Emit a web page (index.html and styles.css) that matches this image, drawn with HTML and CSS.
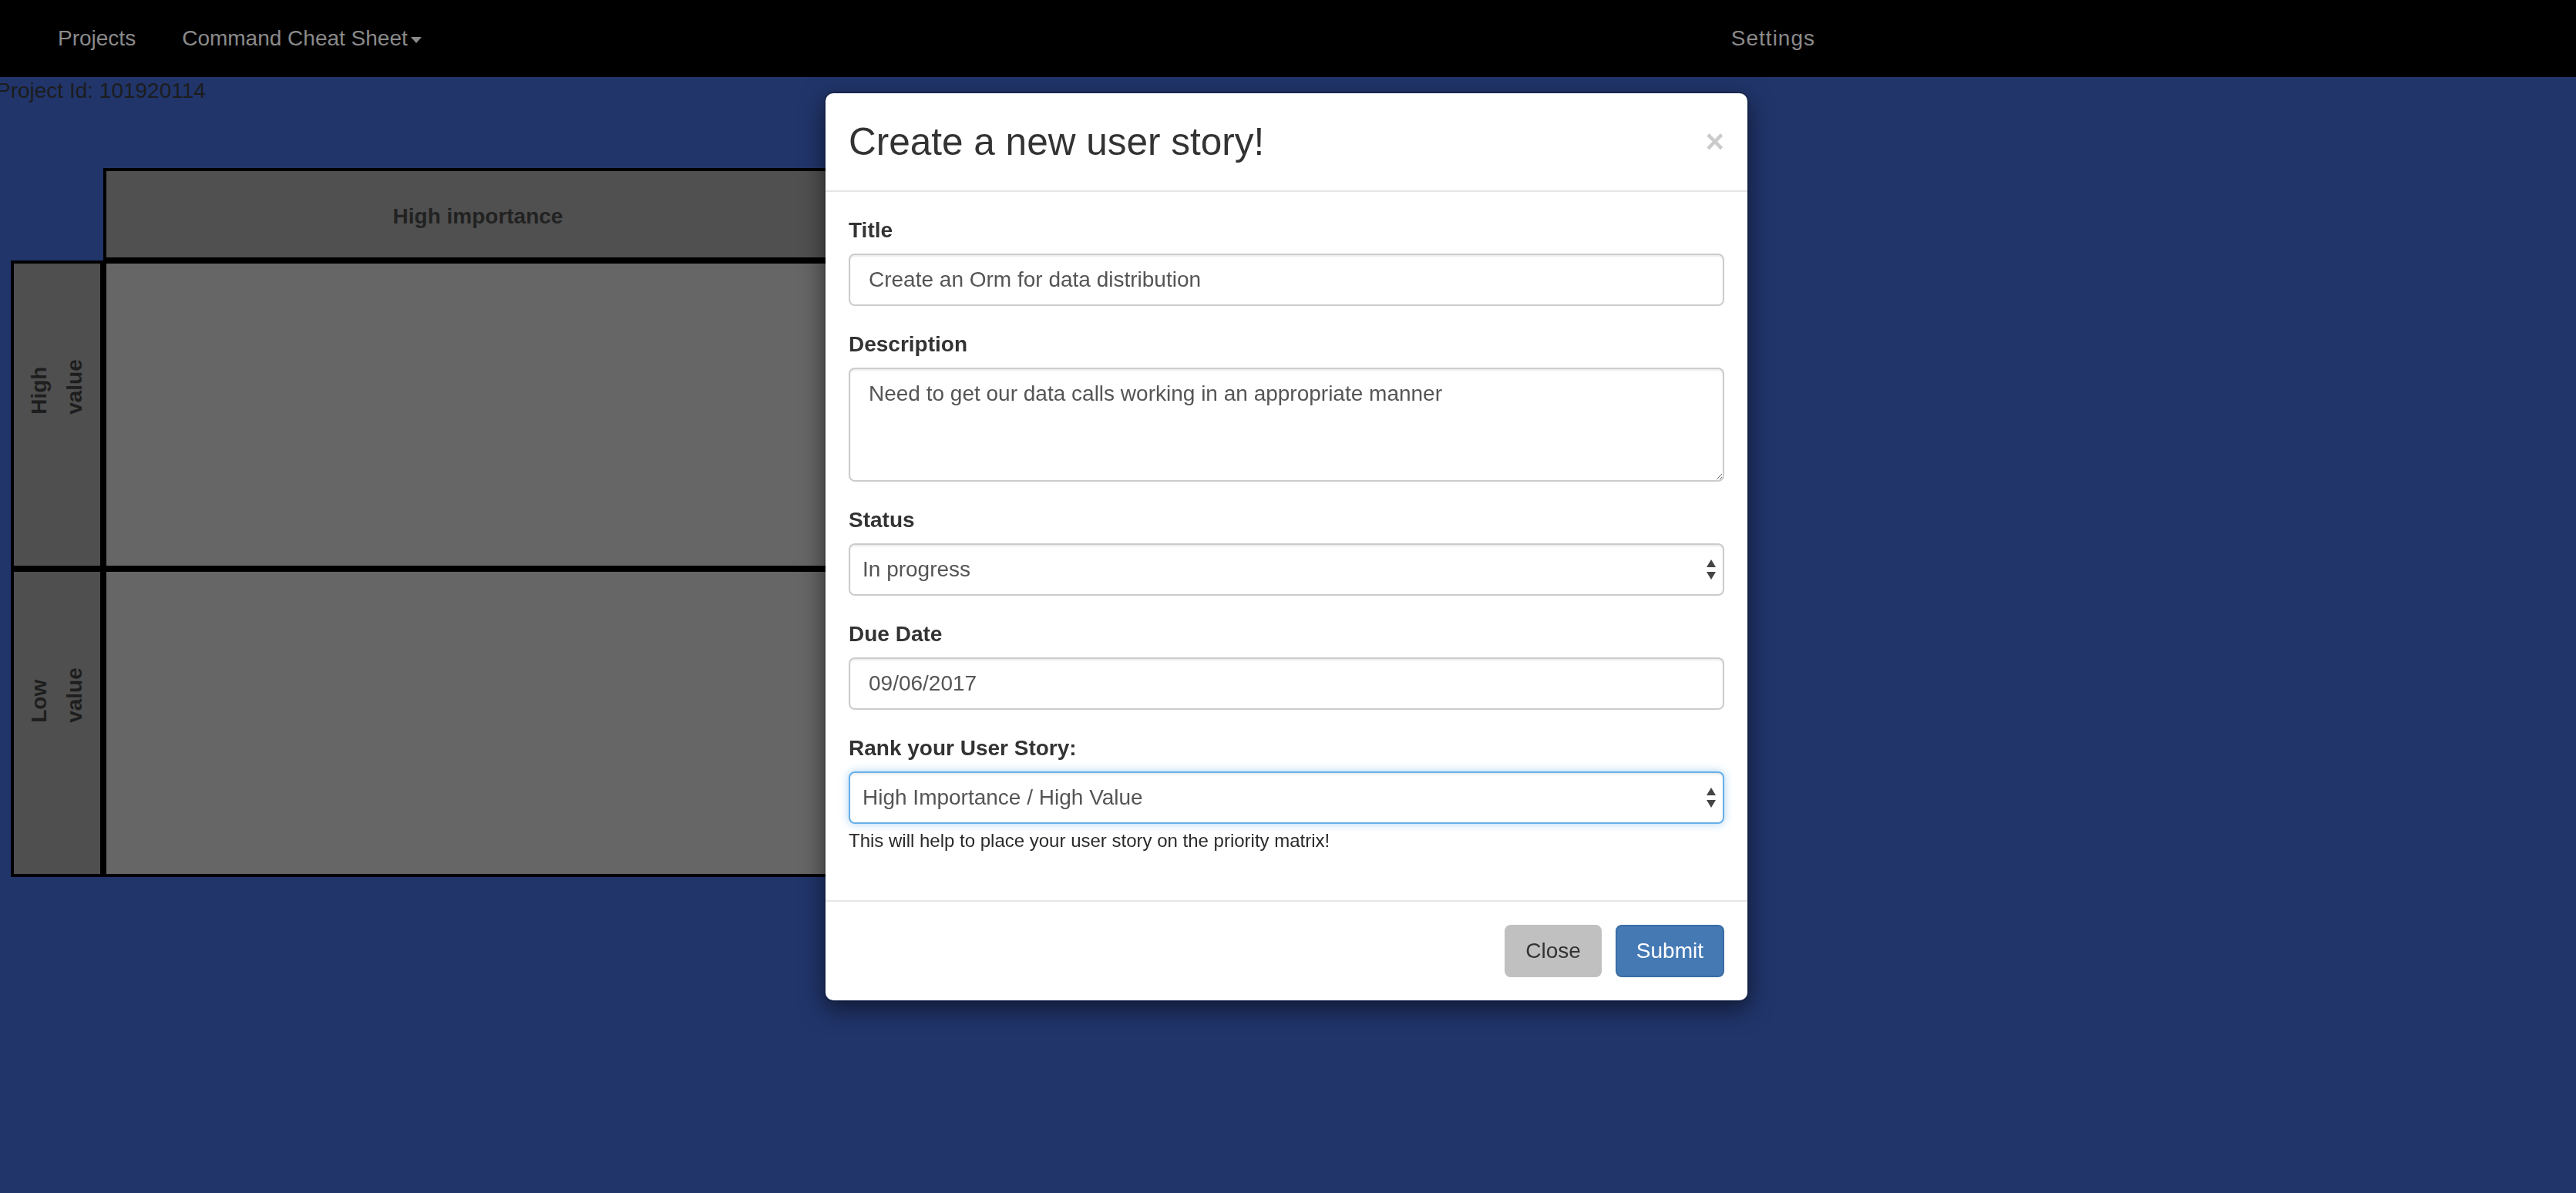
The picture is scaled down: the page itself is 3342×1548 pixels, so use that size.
FILE: index.html
```html
<!DOCTYPE html>
<html lang="en">
<head>
<meta charset="utf-8">
<title>User Stories</title>
<link rel="stylesheet" href="styles.css">
</head>
<body>
<nav class="navbar">
  <ul class="nav">
    <li><a class="nav-link">Projects</a></li>
    <li><a class="nav-link">Command Cheat Sheet<span class="caret"></span></a></li>
  </ul>
  <ul class="nav nav-right">
    <li><a class="nav-link">Settings</a></li>
  </ul>
</nav>

<div class="project-id">Project Id: 101920114</div>

<div class="matrix">
  <div class="corner"></div>
  <div class="head">High importance</div>
  <div class="head">Low importance</div>
  <div class="side"><span class="vlabel">High<br>value</span></div>
  <div class="cell"></div>
  <div class="cell"></div>
  <div class="side"><span class="vlabel">Low<br>value</span></div>
  <div class="cell"></div>
  <div class="cell"></div>
</div>

<div class="modal">
  <div class="modal-dialog">
    <div class="modal-header">
      <h4 class="modal-title">Create a new user story!</h4>
      <span class="close">&times;</span>
    </div>
    <div class="modal-body">
      <div class="form-group">
        <label class="label">Title</label>
        <input class="form-control" type="text" value="Create an Orm for data distribution">
      </div>
      <div class="form-group">
        <label class="label">Description</label>
        <textarea class="form-control textarea" rows="3">Need to get our data calls working in an appropriate manner</textarea>
      </div>
      <div class="form-group">
        <label class="label">Status</label>
        <div class="select-wrap">
          <select class="form-control select"><option>In progress</option></select>
          <svg class="select-arrows" width="12" height="26" viewBox="0 0 12 26"><polygon points="6,0 12,10 0,10" fill="#444"/><polygon points="0,16 12,16 6,26" fill="#444"/></svg>
        </div>
      </div>
      <div class="form-group">
        <label class="label">Due Date</label>
        <input class="form-control" type="text" value="09/06/2017">
      </div>
      <div class="form-group">
        <label class="label">Rank your User Story:</label>
        <div class="select-wrap">
          <select class="form-control select focused"><option>High Importance / High Value</option></select>
          <svg class="select-arrows" width="12" height="26" viewBox="0 0 12 26"><polygon points="6,0 12,10 0,10" fill="#444"/><polygon points="0,16 12,16 6,26" fill="#444"/></svg>
        </div>
        <p class="help">This will help to place your user story on the priority matrix!</p>
      </div>
    </div>
    <div class="modal-footer">
      <button class="btn btn-close" type="button">Close</button>
      <button class="btn btn-submit" type="button">Submit</button>
    </div>
  </div>
</div>
</body>
</html>
```

FILE: styles.css
```css
html, body {
  margin: 0;
  padding: 0;
  background: #21356b;
}
body {
  width: 3342px;
  height: 1548px;
  overflow: hidden;
  font-family: "Liberation Sans", Arial, Helvetica, sans-serif;
  font-size: 28px;
  color: #333;
}

/* navbar */
.navbar {
  display: flex;
  align-items: stretch;
  height: 100px;
  background: #000;
  padding: 0 957px 0 45px;
  box-sizing: border-box;
}
.nav {
  display: flex;
  list-style: none;
  margin: 0;
  padding: 0;
}
.nav-right {
  margin-left: auto;
}
.nav-link {
  display: block;
  padding: 30px;
  line-height: 40px;
  color: #8a8a8a;
  text-decoration: none;
}
.nav-right .nav-link {
  letter-spacing: 1px;
}
.caret {
  display: inline-block;
  width: 0;
  height: 0;
  margin-left: 4px;
  vertical-align: middle;
  border-top: 8px solid #8a8a8a;
  border-left: 7px solid transparent;
  border-right: 7px solid transparent;
}

.project-id {
  margin-left: -5px;
  line-height: 36px;
  color: #1c1c1c;
}

/* priority matrix */
.matrix {
  display: grid;
  grid-template-columns: 120px 972px 972px;
  grid-template-rows: 120px 400px 400px;
  margin: 82px 0 0 14px;
}
.corner {
  background: transparent;
}
.head, .side, .cell {
  box-sizing: border-box;
  border: 4px solid #000;
}
.head {
  background: #505050;
  display: flex;
  align-items: center;
  justify-content: center;
  padding-top: 5px;
  font-weight: bold;
  color: #222;
}
.side {
  background: #4f4f4f;
  display: flex;
  align-items: center;
  justify-content: center;
}
.vlabel {
  writing-mode: vertical-rl;
  transform: translateY(-50%) rotate(180deg);
  font-weight: bold;
  line-height: 46px;
  color: #1e1e1e;
}
.cell {
  background: #666;
}

/* modal */
.modal {
  position: fixed;
  top: 0;
  left: 0;
  right: 0;
  bottom: 0;
  padding-right: 4px;
}
.modal-dialog {
  width: 1200px;
  box-sizing: border-box;
  margin: 119px auto 0;
  background: #fff;
  background-clip: padding-box;
  border: 2px solid rgba(0, 0, 0, 0.2);
  border-radius: 12px;
  box-shadow: 0 10px 30px rgba(0, 0, 0, 0.5);
}
.modal-header {
  display: flex;
  align-items: center;
  justify-content: space-between;
  padding: 30px;
  border-bottom: 2px solid #e5e5e5;
}
.modal-title {
  margin: 0;
  font-size: 49.5px;
  line-height: 66px;
  font-weight: normal;
  color: #333;
}
.close {
  font-size: 42px;
  font-weight: bold;
  line-height: 1;
  color: #000;
  opacity: 0.2;
}
.modal-body {
  padding: 30px;
}
.form-group {
  margin-bottom: 30px;
}
.label {
  display: block;
  font-weight: bold;
  line-height: 40px;
  margin-bottom: 10px;
  color: #333;
}
.form-control {
  display: block;
  width: 100%;
  height: 68px;
  box-sizing: border-box;
  padding: 12px 24px;
  font-family: "Liberation Sans", Arial, Helvetica, sans-serif;
  font-size: 28px;
  line-height: 40px;
  color: #555;
  background: #fff;
  border: 2px solid #ccc;
  border-radius: 8px;
  box-shadow: inset 0 2px 2px rgba(0, 0, 0, 0.075);
  outline: none;
}
.textarea {
  height: 148px;
  resize: vertical;
}
.select-wrap {
  position: relative;
}
.select {
  appearance: none;
  -webkit-appearance: none;
  padding: 0 16px;
}
.focused {
  border-color: #66afe9;
  box-shadow: inset 0 2px 2px rgba(0, 0, 0, 0.075), 0 0 12px rgba(102, 175, 233, 0.55);
}
.select-arrows {
  position: absolute;
  right: 11px;
  top: 21px;
}
.help {
  margin: 5px 0 0;
  font-size: 24px;
  line-height: 34px;
  color: #2a2a2a;
}

.modal-footer {
  display: flex;
  justify-content: flex-end;
  gap: 18px;
  padding: 30px;
  border-top: 2px solid #e5e5e5;
}
.btn {
  font-family: "Liberation Sans", Arial, Helvetica, sans-serif;
  font-size: 28px;
  line-height: 40px;
  padding: 12px 25px;
  border: 2px solid transparent;
  border-radius: 8px;
}
.btn-close {
  background: #c0c0c0;
  border-color: #c0c0c0;
  color: #333;
}
.btn-submit {
  background: #4479b4;
  border-color: #3a6ca5;
  color: #fff;
}
```
